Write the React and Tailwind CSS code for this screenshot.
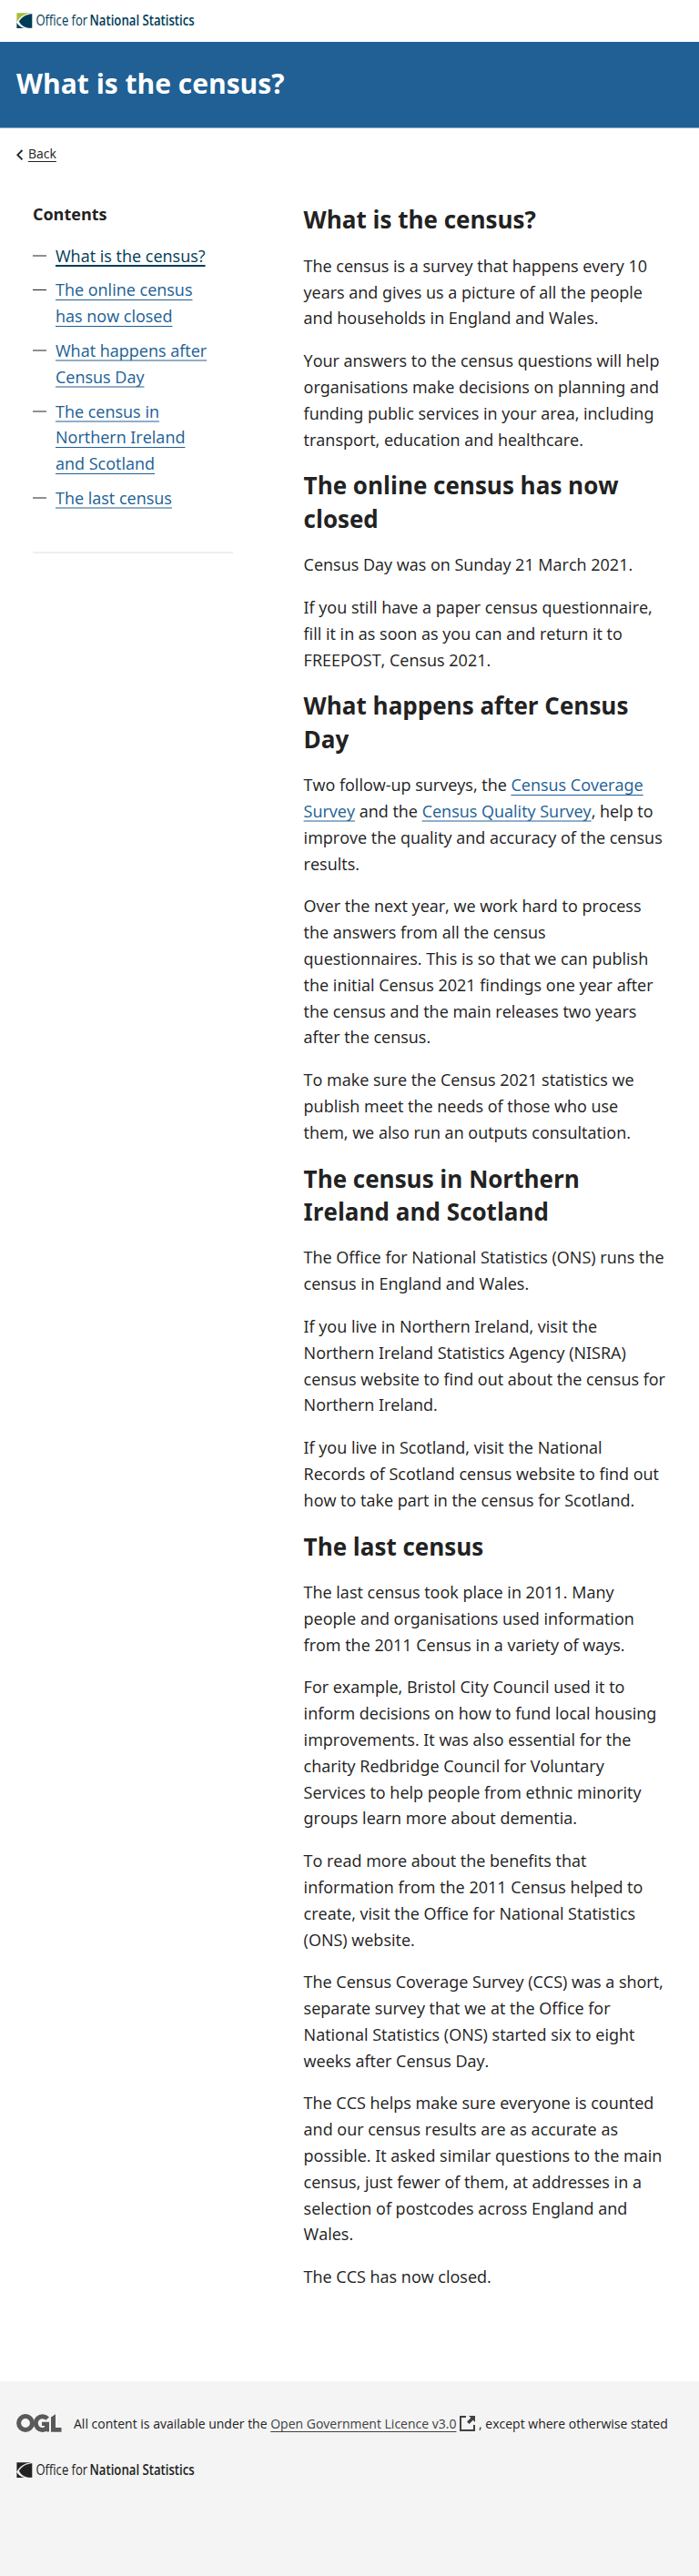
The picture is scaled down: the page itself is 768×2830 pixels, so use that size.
const SECTIONS = [
  {
    title: "What is the census?",
    paras: [
      "The census is a survey that happens every 10 years and gives us a picture of all the people and households in England and Wales.",
      "Your answers to the census questions will help organisations make decisions on planning and funding public services in your area, including transport, education and healthcare.",
    ],
  },
  {
    title: "The online census has now closed",
    paras: [
      "Census Day was on Sunday 21 March 2021.",
      "If you still have a paper census questionnaire, fill it in as soon as you can and return it to FREEPOST, Census 2021.",
    ],
  },
  {
    title: "What happens after Census Day",
    paras: [
      <>
        Two follow-up surveys, the{" "}
        <a href="#">
          <Underlined>Census Coverage</Underlined> <Underlined tone="soft">Survey</Underlined>
        </a>{" "}
        and the{" "}
        <a href="#">
          <Underlined tone="soft">Census Quality Survey</Underlined>
        </a>
        , help to improve the quality and accuracy of the census results.
      </>,
      "Over the next year, we work hard to process the answers from all the census questionnaires. This is so that we can publish the initial Census 2021 findings one year after the census and the main releases two years after the census.",
      "To make sure the Census 2021 statistics we publish meet the needs of those who use them, we also run an outputs consultation.",
    ],
  },
  {
    title: "The census in Northern Ireland and Scotland",
    paras: [
      "The Office for National Statistics (ONS) runs the census in England and Wales.",
      "If you live in Northern Ireland, visit the Northern Ireland Statistics Agency (NISRA) census website to find out about the census for Northern Ireland.",
      "If you live in Scotland, visit the National Records of Scotland census website to find out how to take part in the census for Scotland.",
    ],
  },
  {
    title: "The last census",
    paras: [
      "The last census took place in 2011. Many people and organisations used information from the 2011 Census in a variety of ways.",
      "For example, Bristol City Council used it to inform decisions on how to fund local housing improvements. It was also essential for the charity Redbridge Council for Voluntary Services to help people from ethnic minority groups learn more about dementia.",
      "To read more about the benefits that information from the 2011 Census helped to create, visit the Office for National Statistics (ONS) website.",
      "The Census Coverage Survey (CCS) was a short, separate survey that we at the Office for National Statistics (ONS) started six to eight weeks after Census Day.",
      "The CCS helps make sure everyone is counted and our census results are as accurate as possible. It asked similar questions to the main census, just fewer of them, at addresses in a selection of postcodes across England and Wales.",
      "The CCS has now closed.",
    ],
  },
];

const CONTENTS = [
  { parts: [["What is the census?", "current"]], dash: "mt-[13.2px] h-[2px] bg-[#909090]" },
  { parts: [["The online census has now closed", "crisp"]], dash: "mt-[13.5px] h-px bg-[#222]" },
  { parts: [["What happens after Census Day", "soft"]], dash: "mt-[13.2px] h-[2px] bg-[#909090]" },
  {
    parts: [
      ["The census in", "soft"],
      ["Northern Ireland and Scotland", "crisp"],
    ],
    dash: "mt-[13.2px] h-[2px] bg-[#909090]",
  },
  { parts: [["The last census", "soft"]], dash: "mt-[13.2px] h-[2px] bg-[#909090]" },
];

const TONES = {
  current: "text-[#003c57] underline decoration-2 underline-offset-[3px] [text-decoration-skip-ink:none]",
  crisp: "text-[#206095] underline decoration-1 underline-offset-[4px] [text-decoration-skip-ink:none]",
  soft: "text-[#206095] underline decoration-[#90afca] decoration-2 underline-offset-[3px] [text-decoration-skip-ink:none]",
};

function Underlined({ children, tone = "crisp" }) {
  return <span className={TONES[tone]}>{children}</span>;
}

function Logo({ ink, accent, gap }) {
  return (
    <svg width="197" height="26" viewBox="0 -4 197 26" className="block overflow-visible" role="img" aria-label="Office for National Statistics">
      <path d="M.4 .2H16.500C9 1 3.500 4.500 .4 10.500Z" fill={accent} />
      <path d="M.4 10.800C2 14 5 16.300 9 17H.4Z" fill={ink} />
      <path d="M17.500 1V17H13C8 16 4.600 13.500 2.600 9.500C6 4.200 10.500 1.700 17.500 1Z" fill={ink} stroke={gap} strokeWidth=".4" />
      <text x="21.400" y="14" fontFamily="'Open Sans', sans-serif" fontSize="15.400" fill={ink} textLength="56.800" lengthAdjust="spacingAndGlyphs">
        Office for
      </text>
      <text x="80.500" y="14" fontFamily="'Open Sans', sans-serif" fontSize="15.400" fontWeight="600" fill={ink} textLength="115.200" lengthAdjust="spacingAndGlyphs">
        National Statistics
      </text>
    </svg>
  );
}

function OglLogo() {
  return (
    <svg width="50" height="20" viewBox="0 0 50 20" className="block shrink-0" role="img" aria-label="OGL">
      <g fill="none" stroke="#595959" strokeWidth="5">
        <circle cx="10" cy="10" r="7.400" />
        <path d="M34.200 5.200A7.400 7.400 0 1 0 34.200 15" />
      </g>
      <path d="M28 8.800H36V19.500H33.500L31 16V13H28Z" fill="#595959" />
      <path d="M38 3.500L43 .3V15H49.500V19.800H38Z" fill="#595959" />
    </svg>
  );
}

export default function App() {
  return (
    <div className="flex min-h-[2830px] flex-col bg-white font-['Open_Sans',sans-serif] text-[18px] leading-[28.8px] text-[#222] [font-feature-settings:'ss01']">
      <header>
        <div className="h-[46px] px-[18px] pt-[10px]">
          <Logo ink="#003c57" accent="#a8bd3a" gap="#fff" />
        </div>
        <div className="h-[95px] border-b border-[#90afca] bg-[#206095] px-[18px] pt-[24.8px]">
          <h1 className="text-[30px] leading-[42px] font-bold text-white">What is the census?</h1>
        </div>
      </header>

      <nav className="flex h-[58px] items-start px-[18px] pt-[16.6px] text-[14px] leading-[22.4px]">
        <svg width="8" height="13" viewBox="0 0 8 13" className="mt-[6px] mr-[5px]" fill="none" stroke="#222" strokeWidth="1.900">
          <path d="M6.500 1L1.300 6.200L6.500 11.400" />
        </svg>
        <a href="#" className="underline decoration-1 underline-offset-[3px] [text-decoration-skip-ink:none]">
          Back
        </a>
      </nav>

      <div className="flex flex-1 items-start pl-9">
        <aside className="mt-[21.8px] w-[220px] border-b-2 border-[#eee] pb-[44.3px]">
          <h2 className="mb-[17.1px] font-bold">Contents</h2>
          <ul className="flex flex-col gap-[9px]">
            {CONTENTS.map(({ parts, dash }) => (
              <li key={parts[0][0]} className="flex">
                <span className="mr-[10px] w-[15px] shrink-0">
                  <span className={`block ${dash}`} />
                </span>
                <a href="#" className="w-[172px]">
                  {parts.map(([text, tone], i) => (
                    <span key={text}>
                      {i > 0 && " "}
                      <Underlined tone={tone}>{text}</Underlined>
                    </span>
                  ))}
                </a>
              </li>
            ))}
          </ul>
        </aside>

        <main className="mt-[24.4px] ml-[77.6px] flex w-[398.4px] flex-col gap-[18px]">
          {SECTIONS.map(({ title, paras }) => (
            <section key={title} className="flex flex-col gap-[18px]">
              <h2 className="text-[26px] leading-[36.4px] font-bold">{title}</h2>
              {paras.map((p, i) => (
                <p key={i}>{p}</p>
              ))}
            </section>
          ))}
        </main>
      </div>

      <footer className="h-[214px] bg-[#f4f4f4] px-[18px] pt-9">
        <div className="flex h-[20px] items-center text-[14px] leading-[22.4px]">
          <OglLogo />
          <p className="mt-[1.5px] ml-[13px] whitespace-nowrap">
            All content is available under the{" "}
            <a href="#" className="text-[#414042]">
              <span className="underline decoration-1 underline-offset-[3px] [text-decoration-skip-ink:none]">
                Open Government Licence v3.0
              </span>
              <svg width="17" height="17" viewBox="0 0 17 17" className="ml-1 inline-block align-[-3px]">
                <path d="M7 1H1V16H16V10" fill="none" stroke="#414042" strokeWidth="2" />
                <path d="M10 0H17V7L14.800 4.800L10.500 9.100L8 6.600L12.300 2.300Z" fill="#414042" />
              </svg>
            </a>{" "}
            , except where otherwise stated
          </p>
        </div>
        <div className="mt-[29px]">
          <Logo ink="#222" accent="#222" gap="#f4f4f4" />
        </div>
      </footer>
    </div>
  );
}
